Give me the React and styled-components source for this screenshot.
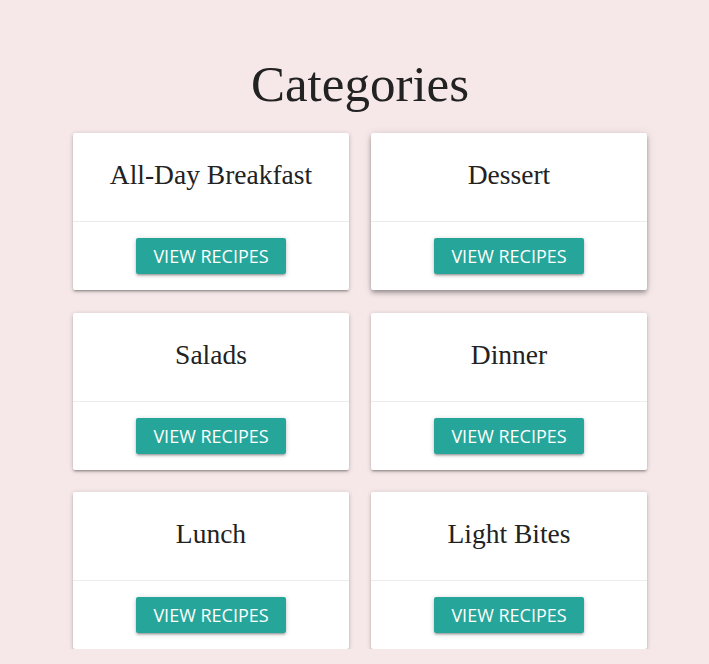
import React from "react";
import styled, { createGlobalStyle } from "styled-components";

const Global = createGlobalStyle`
  html, body {
    margin: 0;
    background: #f6e8e9;
  }
  body {
    font-family: "Open Sans", "Liberation Sans", sans-serif;
  }
`;

const Page = styled.main`
  padding: 53px 0 0 11px;
  display: flex;
  flex-direction: column;
  align-items: center;
`;

const Heading = styled.h1`
  margin: 0 0 18px 0;
  font-family: "Liberation Serif", serif;
  font-weight: 400;
  font-size: 51px;
  line-height: 62px;
  color: #222;
`;

const Grid = styled.div`
  display: grid;
  grid-template-columns: 276px 276px;
  column-gap: 22px;
  row-gap: 22.5px;
`;

const Card = styled.div`
  background: #fff;
  border-radius: 2px;
  box-shadow: ${(p) =>
    p.$raised
      ? "0 4px 5px 0 rgba(0,0,0,.14), 0 1px 10px 0 rgba(0,0,0,.12), 0 2px 4px -1px rgba(0,0,0,.3)"
      : "0 2px 2px 0 rgba(0,0,0,.14), 0 3px 1px -2px rgba(0,0,0,.12), 0 1px 5px 0 rgba(0,0,0,.2)"};
  display: flex;
  flex-direction: column;
`;

const CardTitle = styled.div`
  box-sizing: border-box;
  height: 89px;
  padding-bottom: 4px;
  display: flex;
  align-items: center;
  justify-content: center;
  font-family: "Liberation Serif", serif;
  font-size: 27.5px;
  color: #222;
  border-bottom: 1px solid rgba(160, 160, 160, 0.2);
`;

const Action = styled.div`
  height: 68px;
  display: flex;
  align-items: center;
  justify-content: center;
`;

const Button = styled.button`
  width: 150px;
  height: 36px;
  border: none;
  border-radius: 2px;
  background: #26a69a;
  color: #fff;
  font-family: "Open Sans", sans-serif;
  font-size: 18px;
  text-transform: uppercase;
  box-shadow: 0 2px 2px 0 rgba(0,0,0,.14), 0 3px 1px -2px rgba(0,0,0,.12), 0 1px 5px 0 rgba(0,0,0,.2);
  cursor: pointer;
  padding: 0;
`;

const categories = [
  "All-Day Breakfast",
  "Dessert",
  "Salads",
  "Dinner",
  "Lunch",
  "Light Bites",
];

export default function App() {
  return (
    <>
      <Global />
      <Page>
        <Heading>Categories</Heading>
        <Grid>
          {categories.map((name) => (
            <Card key={name} $raised={name === "Dessert"}>
              <CardTitle>{name}</CardTitle>
              <Action>
                <Button>View Recipes</Button>
              </Action>
            </Card>
          ))}
        </Grid>
      </Page>
    </>
  );
}
